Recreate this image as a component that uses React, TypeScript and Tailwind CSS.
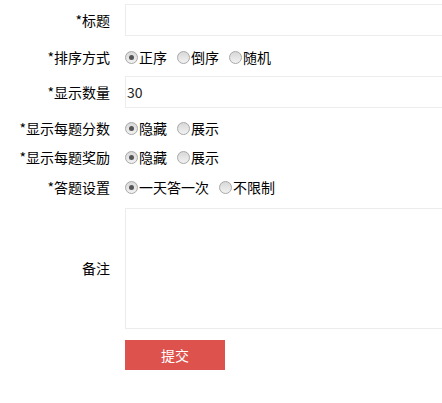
import React from "react";

const font = { fontFamily: '"Noto Sans CJK SC", "Microsoft YaHei", sans-serif' };

function Radio({ checked, label }: { checked?: boolean; label: string }) {
  return (
    <label className="flex items-center mr-[10px]">
      <span className="relative w-[13px] h-[13px] rounded-full border border-[#a8a8a8] bg-gradient-to-b from-[#d8d8d8] to-[#f2f2f2] flex items-center justify-center mr-px">
        {checked && <span className="w-[5px] h-[5px] rounded-full bg-[#555]" />}
      </span>
      <span className="text-[14px] text-black">{label}</span>
    </label>
  );
}

function Label({ children }: { children: React.ReactNode }) {
  return <div className="w-[110px] shrink-0 text-right text-[14px] text-black mr-[15px]">{children}</div>;
}

export default function App() {
  return (
    <div className="w-[442px] h-[403px] bg-white overflow-hidden pt-[4px]" style={font}>
      <div className="flex items-center h-[32px]">
        <Label>*标题</Label>
        <div className="h-[32px] w-[330px] border border-[#ececec] shrink-0" />
      </div>
      <div className="flex items-center h-[30px] mt-[6px]">
        <Label>*排序方式</Label>
        <div className="flex items-center">
          <Radio checked label="正序" />
          <Radio label="倒序" />
          <Radio label="随机" />
        </div>
      </div>
      <div className="flex items-center h-[32px] mt-[4px]">
        <Label>*显示数量</Label>
        <div className="h-[32px] w-[330px] border border-[#ececec] shrink-0 flex items-center text-[14px] text-[#222] pl-px">30</div>
      </div>
      <div className="flex items-center h-[30px] mt-[5px]">
        <Label>*显示每题分数</Label>
        <div className="flex items-center">
          <Radio checked label="隐藏" />
          <Radio label="展示" />
        </div>
      </div>
      <div className="flex items-center h-[29px]">
        <Label>*显示每题奖励</Label>
        <div className="flex items-center">
          <Radio checked label="隐藏" />
          <Radio label="展示" />
        </div>
      </div>
      <div className="flex items-center h-[30px]">
        <Label>*答题设置</Label>
        <div className="flex items-center">
          <Radio checked label="一天答一次" />
          <Radio label="不限制" />
        </div>
      </div>
      <div className="flex items-center h-[121px] mt-[6px]">
        <Label>备注</Label>
        <div className="h-[121px] w-[330px] border border-[#ececec] shrink-0" />
      </div>
      <div className="flex mt-[11px]">
        <div className="w-[125px] shrink-0" />
        <button className="w-[100px] h-[30px] bg-[#dd524c] text-white text-[14px] flex items-center justify-center">提交</button>
      </div>
    </div>
  );
}
